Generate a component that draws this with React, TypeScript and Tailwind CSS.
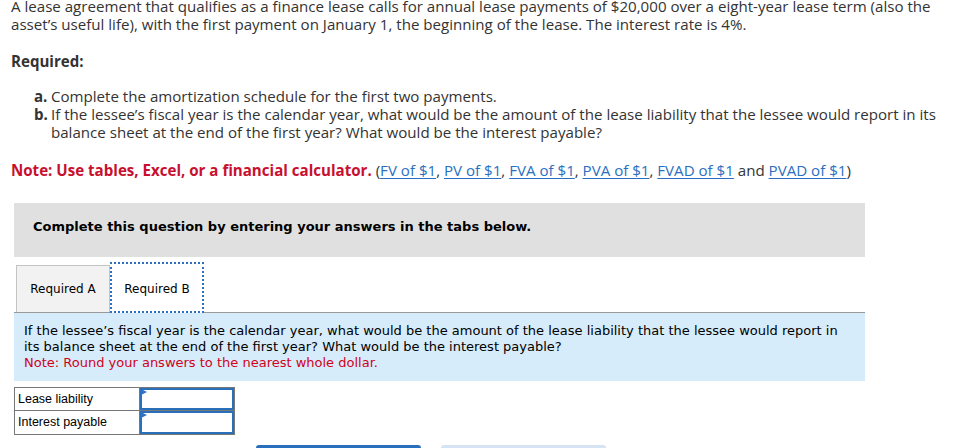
import React from "react";

// ─── Data ────────────────────────────────────────────────────────────────────

const LINKS = ["FV of $1", "PV of $1", "FVA of $1", "PVA of $1", "FVAD of $1", "PVAD of $1"];

const ROWS = ["Lease liability", "Interest payable"];

const PROSE = "font-['Open_Sans','Lato',sans-serif]";
const VERDANA = "font-['Verdana','DejaVu_Sans',sans-serif]";

// ─── Pieces ──────────────────────────────────────────────────────────────────

function Link({ children }: { children: React.ReactNode }) {
  return <span className="text-[#2a70c2] underline underline-offset-2">{children}</span>;
}

function AnswerRow({ label, last }: { label: string; last?: boolean }) {
  return (
    <div className={`flex h-[23px] ${last ? "" : "border-b border-[#777]"}`}>
      <div className="w-[125px] border-r border-[#777] px-[3px] text-[12.5px] leading-[22px] text-black font-['Liberation_Sans',Arial,sans-serif]">
        {label}
      </div>
      <div className="relative flex-1 border-2 border-[#2a6fb9] bg-white">
        <svg className="absolute -left-[1px] -top-[1px]" width="6" height="6" viewBox="0 0 6 6">
          <polygon points="0,0 6,3 0,6" fill="#2a73c9" />
        </svg>
      </div>
    </div>
  );
}

// ─── Page ────────────────────────────────────────────────────────────────────

export default function App() {
  return (
    <div className={`-mt-[3px] h-[451px] overflow-hidden bg-white text-[#333] ${PROSE}`}>
      {/* Question text */}
      <div className="pl-[11px] pr-[8px] text-[15.1px] leading-[18px]">
        <p className="pr-[8px]">
          A lease agreement that qualifies as a finance lease calls for annual lease payments of $20,000 over a
          eight-year lease term (also the asset’s useful life), with the first payment on January 1, the beginning of
          the lease. The interest rate is 4%.
        </p>
        <p className="mt-[19px] font-bold">Required:</p>
        <div className="mt-[17px] pl-[23px]">
          <div className="flex">
            <span className="w-[17px] shrink-0 font-bold">a.</span>
            <span>Complete the amortization schedule for the first two payments.</span>
          </div>
          <div className="flex">
            <span className="w-[17px] shrink-0 font-bold">b.</span>
            <span>
              If the lessee’s fiscal year is the calendar year, what would be the amount of the lease liability that the
              lessee would report in its balance sheet at the end of the first year? What would be the interest payable?
            </span>
          </div>
        </div>
        <p className="mt-[20px]">
          <span className="font-bold text-[#c8102e]">Note: Use tables, Excel, or a financial calculator.</span> (
          {LINKS.map((l, i) => (
            <React.Fragment key={l}>
              <Link>{l}</Link>
              {i < LINKS.length - 2 ? ", " : i === LINKS.length - 2 ? " and " : ""}
            </React.Fragment>
          ))}
          )
        </p>
      </div>

      {/* Instruction bar */}
      <div className={`mx-[14px] mt-[24px] w-[851px] ${VERDANA}`}>
        <div className="flex h-[54px] items-center bg-[#e0e0e0] pb-[7px] pl-[19px] text-[13px] font-bold text-black">
          Complete this question by entering your answers in the tabs below.
        </div>

        {/* Tabs */}
        <div className="mt-[5px] flex items-end border-b border-[#999] pl-[2px] text-[12px] text-black">
          <div className="flex h-[47px] w-[94px] items-center justify-center border border-b-0 border-[#c4c4c4] bg-[#f2f2f2]">
            Required A
          </div>
          <div className="-mb-px flex h-[51px] w-[94px] items-center justify-center border-2 border-dotted border-[#2f6fc0] bg-white pt-[3px]">
            Required B
          </div>
        </div>

        {/* Panel */}
        <div className="bg-[#d7ecfa] px-[10px] pb-[10px] pt-[10px] text-[13px] leading-[16px] text-black">
          <p>
            If the lessee’s fiscal year is the calendar year, what would be the amount of the lease liability that the
            lessee would report in its balance sheet at the end of the first year? What would be the interest payable?
          </p>
          <p className="text-[#d0021b]">Note: Round your answers to the nearest whole dollar.</p>
        </div>

        {/* Answers */}
        <div className="mt-[6px] w-[221px] border border-[#777]">
          {ROWS.map((r, i) => (
            <AnswerRow key={r} label={r} last={i === ROWS.length - 1} />
          ))}
        </div>

        {/* Navigation buttons */}
        <div className="mt-[10px] flex gap-[20px] pl-[242px]">
          <div className="h-[36px] w-[165px] rounded-t-[3px] bg-[#2a6fbd]" />
          <div className="h-[36px] w-[165px] rounded-t-[3px] bg-[#d5e3f3]" />
        </div>
      </div>
    </div>
  );
}
